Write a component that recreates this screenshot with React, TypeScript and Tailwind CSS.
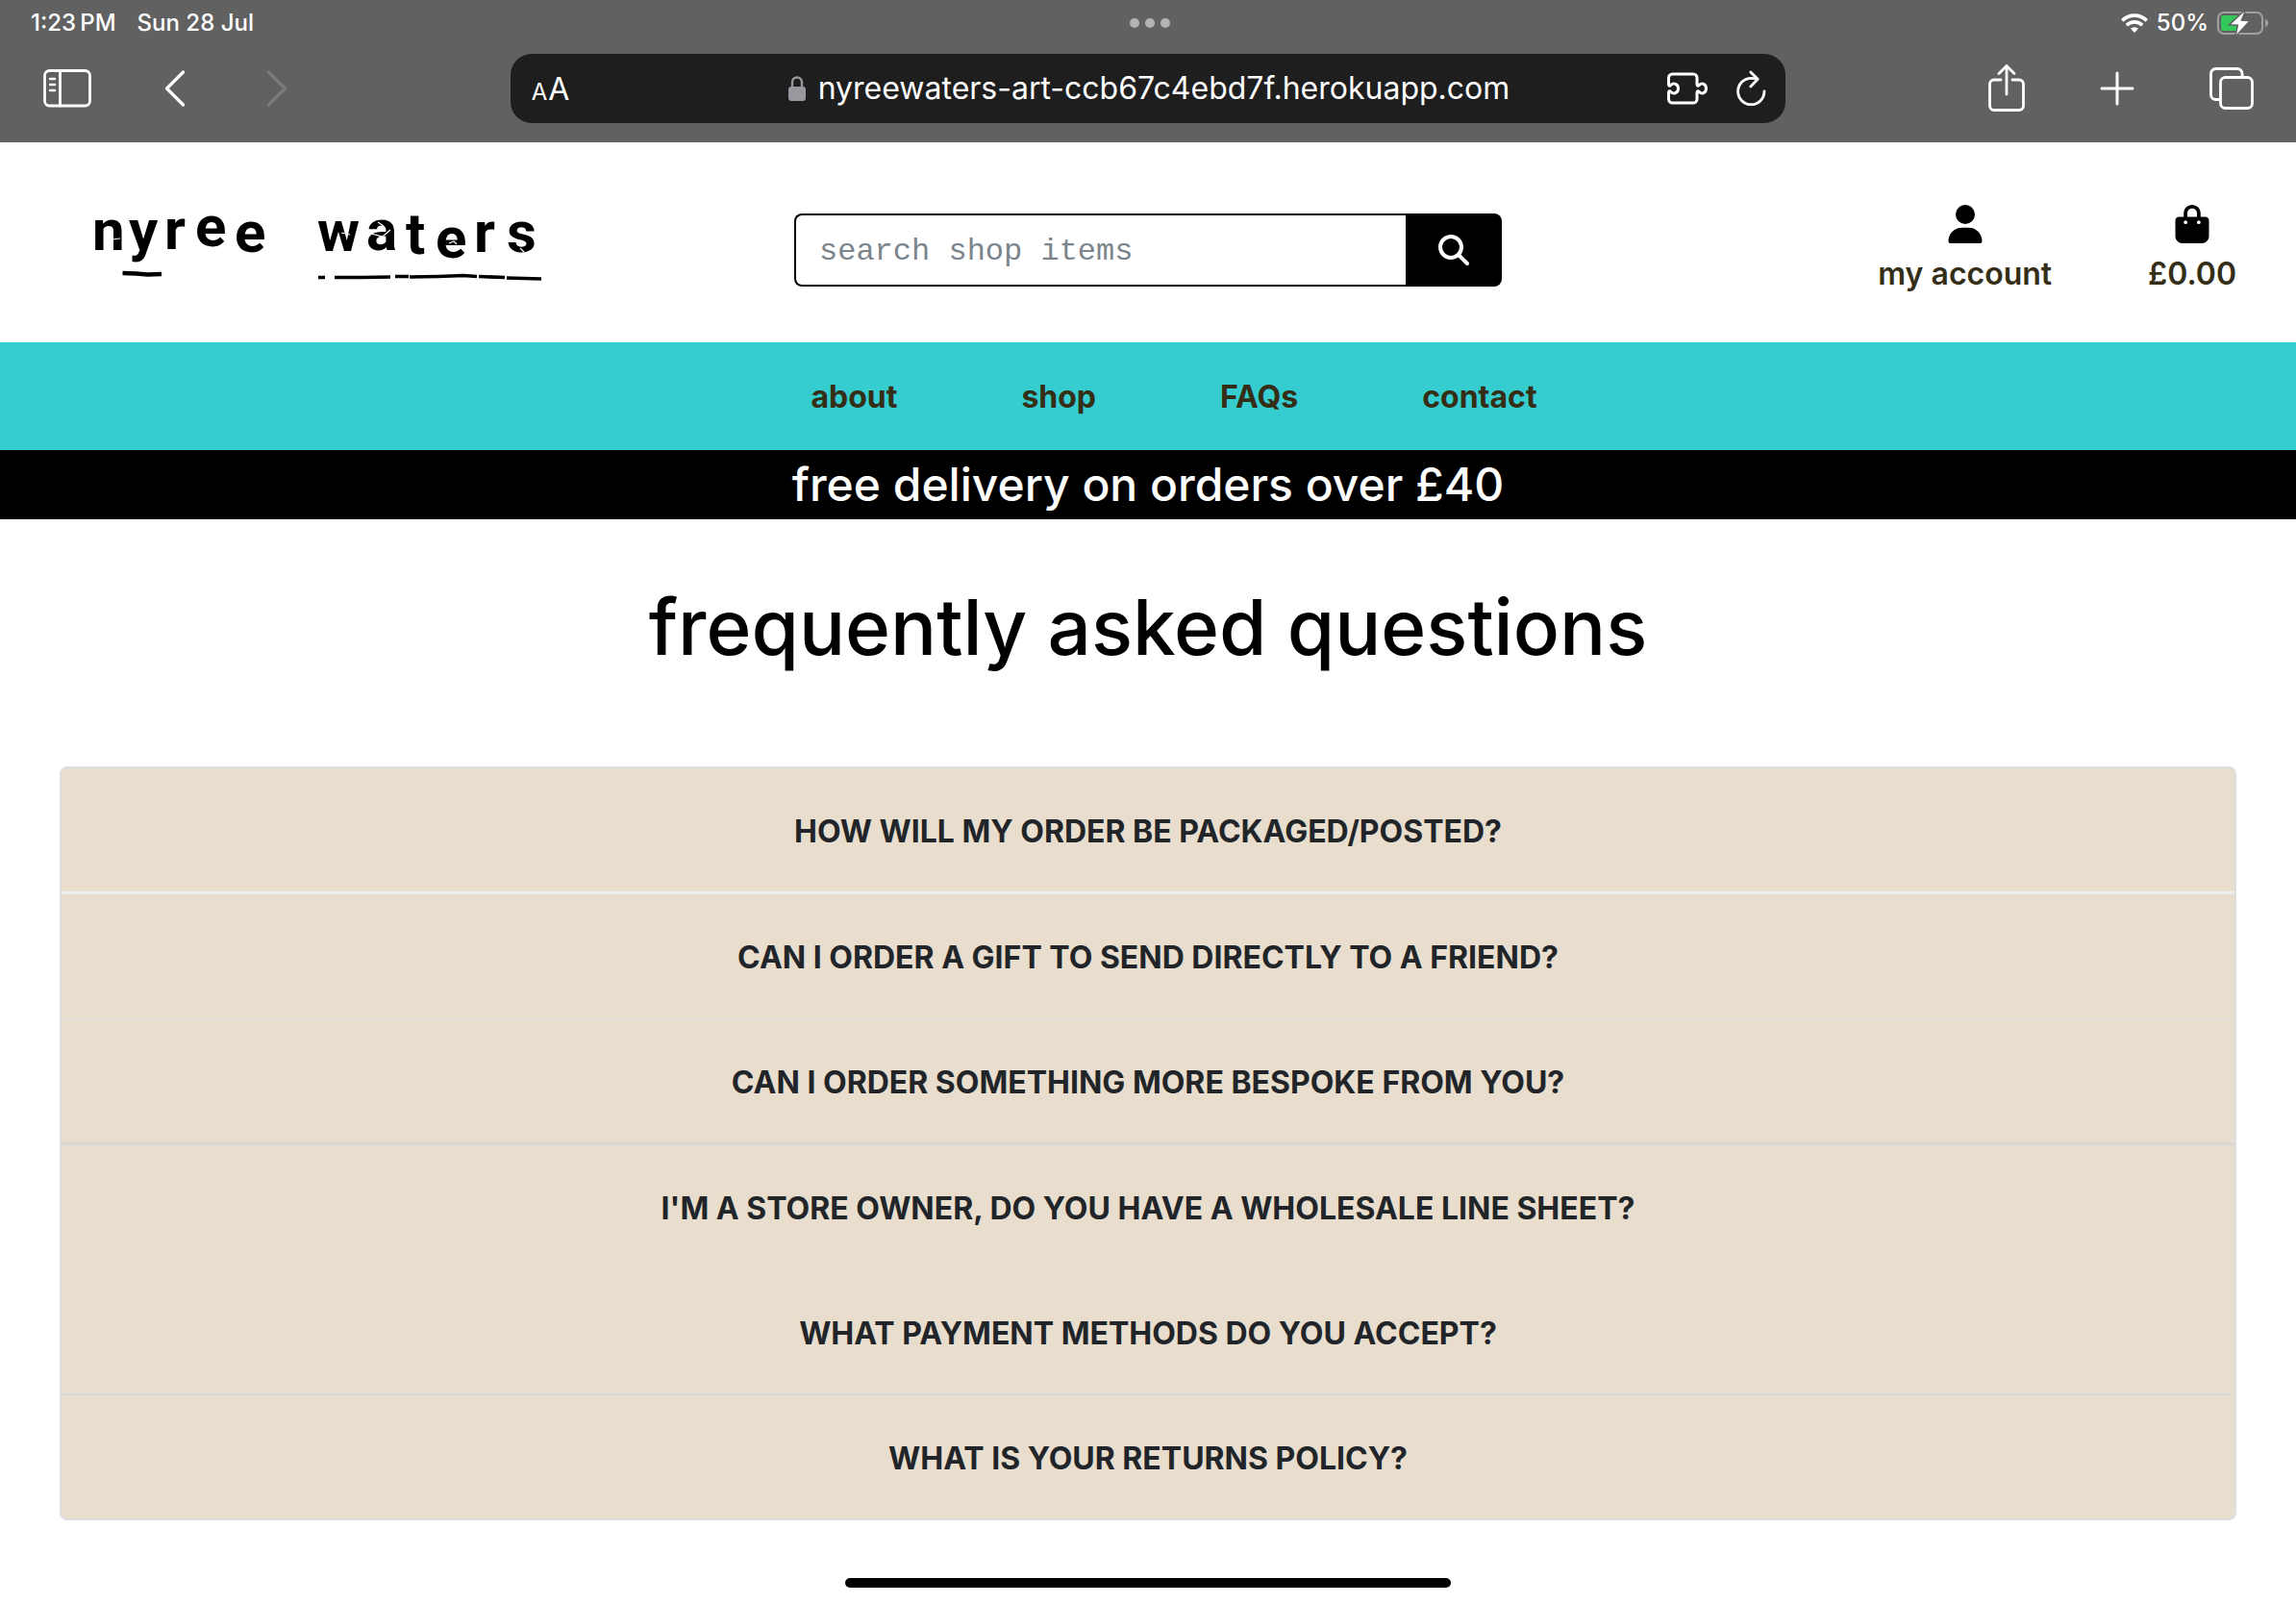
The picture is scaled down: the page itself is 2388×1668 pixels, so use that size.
import React from "react";
import { FaBagShopping, FaMagnifyingGlass, FaUser } from "react-icons/fa6";

const navLinks = ["about", "shop", "FAQs", "contact"];

const questions = [
  { text: "How will my order be packaged/posted?", divider: "border-b-[3px] border-[#edeef0]" },
  { text: "Can I order a gift to send directly to a friend?", divider: "border-b-2 border-[#e0dedb]" },
  { text: "Can I order something more bespoke from you?", divider: "border-b-[3px] border-[#d9d8d5]" },
  { text: "I'm a store owner, do you have a wholesale line sheet?", divider: "border-b-2 border-[#e5ddd1]" },
  { text: "What payment methods do you accept?", divider: "border-b-2 border-[#d9d9d8]" },
  { text: "What is your returns policy?", divider: "" },
];

function StatusBar() {
  return (
    <div className="grid h-12 grid-cols-3 items-center pr-7 pl-8 text-2xl font-medium">
      <div className="flex gap-[22px]">
        <span>1:23{"\u2009"}PM</span>
        <span>Sun 28 Jul</span>
      </div>
      <div className="flex justify-center gap-[6px]">
        <span className="size-[10px] rounded-full bg-[#b4b4b4]" />
        <span className="size-[10px] rounded-full bg-[#b4b4b4]" />
        <span className="size-[10px] rounded-full bg-[#b4b4b4]" />
      </div>
      <div className="flex items-center justify-end gap-[9px]">
        <svg width="28" height="20" viewBox="0 0 28 20" fill="none" stroke="white" strokeWidth="3.6" aria-label="Wi-Fi">
          <path d="M1.3 7.4A18 18 0 0 1 26.7 7.4" />
          <path d="M5.8 12.2a11.8 11.8 0 0 1 16.4 0" />
          <path d="M14 20l-4-4.2a5.8 5.8 0 0 1 8 0z" fill="white" stroke="none" />
        </svg>
        <span>50%</span>
        <svg width="54" height="26" viewBox="0 -1 54 26" aria-label="Battery charging">
          <rect x="1" y="1" width="46" height="22" rx="6" fill="none" stroke="#a1a1a1" strokeWidth="2" />
          <path d="M50 8c4 1 4 7 0 8z" fill="#a1a1a1" />
          <path d="M6 4h18v16H6a2 2 0 0 1-2-2V6a2 2 0 0 1 2-2z" fill="#34c759" />
          <path
            d="M28.3 0L14.3 13.2l8 .3L20 24l12.5-13.8-8.2-.4z"
            fill="white"
            stroke="#616161"
            strokeWidth="3"
            paintOrder="stroke"
          />
        </svg>
      </div>
    </div>
  );
}

function Toolbar() {
  return (
    <div className="grid grid-cols-[2fr_5fr_2fr] items-center pt-2 pb-5">
      <div className="flex items-center gap-[68px] pl-[45px]">
        <button aria-label="Show sidebar">
          <svg className="block" width="50" height="40" viewBox="0 0 50 40" fill="none" stroke="white" strokeWidth="2.8" strokeLinecap="round">
            <rect x="1.5" y="1.5" width="47" height="36.5" rx="5" />
            <path d="M17.5 2v36" />
            <path d="M7 10h5M7 16h5M7 22h5" strokeWidth="2.4" />
          </svg>
        </button>
        <button aria-label="Back">
          <svg className="block" width="38" height="40" viewBox="0 0 38 40" fill="none" stroke="white" strokeWidth="3.2" strokeLinecap="round" strokeLinejoin="round">
            <path d="M27.5 3L10.5 20l17 17" />
          </svg>
        </button>
        <button aria-label="Forward" disabled>
          <svg className="block" width="38" height="40" viewBox="0 0 38 40" fill="none" stroke="#7b7b7b" strokeWidth="3.2" strokeLinecap="round" strokeLinejoin="round">
            <path d="M10.5 3l17 17-17 17" />
          </svg>
        </button>
      </div>

      <div className="grid h-[72px] grid-cols-[1fr_auto_1fr] items-center rounded-[22px] bg-[#1e1e1e] pr-5 pl-[22px]">
        <button className="flex items-baseline gap-px justify-self-start pt-1" aria-label="Page settings">
          <span className="text-2xl leading-10">A</span>
          <span className="text-[32px] leading-10">A</span>
        </button>
        <a href="#" className="flex items-center gap-[13px] text-[32px] leading-10">
          <svg width="18" height="28" viewBox="0 0 18 28" aria-hidden="true">
            <path d="M4 14V7.5a5 5 0 0 1 10 0V14" fill="none" stroke="#98989f" strokeWidth="2.4" />
            <rect x="0" y="12" width="18" height="15" rx="3" fill="#98989f" />
          </svg>
          nyreewaters-art-ccb67c4ebd7f.herokuapp.com
        </a>
        <div className="flex items-center gap-[30px] justify-self-end">
          <button aria-label="Extensions">
            <svg className="block" width="42" height="34" viewBox="0 0 42 34" fill="none" stroke="white" strokeWidth="3" strokeLinejoin="round">
              <path d="M5.5 2h21.500a4 4 0 0 1 4 4v6.500c0 2.300 1.300 2 2.300.9 2.700-3 7.200-.9 7.200 3.600s-4.500 6.600-7.200 3.600c-1-1.100-2.300-1.400-2.300.9V28a4 4 0 0 1-4 4H5.5a4 4 0 0 1-4-4v-6.500c0-2.300 1.300-2 2.300-.9 2.700 3 7.700.9 7.700-3.600s-5-6.600-7.700-3.600c-1 1.100-2.300 1.400-2.300-.9V6a4 4 0 0 1 4-4z" />
            </svg>
          </button>
          <button aria-label="Reload">
            <svg className="block" width="31" height="38" viewBox="0 0 31 38" fill="none" stroke="white" strokeWidth="2.8" strokeLinecap="round" strokeLinejoin="round">
              <path d="M29 22a13.700 13.700 0 1 1-13.700-13.700c2 0 4 .3 6 .8" />
              <path d="M14.800 2l7.400 7.300-7.400 7.600" />
            </svg>
          </button>
        </div>
      </div>

      <div className="flex items-center justify-end gap-[78px] pr-11">
        <button aria-label="Share">
          <svg className="block" width="38" height="50" viewBox="0 0 38 50" fill="none" stroke="white" strokeWidth="2.8" strokeLinecap="round" strokeLinejoin="round">
            <path d="M13 16H6a4.500 4.500 0 0 0-4.500 4.500V43A4.500 4.500 0 0 0 6 47.500h26a4.500 4.500 0 0 0 4.500-4.500V20.500A4.500 4.500 0 0 0 32 16h-7" />
            <path d="M19 31V1.500M11 9.500l8-8 8 8" />
          </svg>
        </button>
        <button aria-label="New tab">
          <svg className="block" width="36" height="36" viewBox="0 0 36 36" fill="none" stroke="white" strokeWidth="3" strokeLinecap="round">
            <path d="M18 2v32M2 18h32" />
          </svg>
        </button>
        <button aria-label="Show tabs">
          <svg className="block" width="46" height="44" viewBox="0 0 46 44" fill="none" stroke="white" strokeWidth="2.8" strokeLinejoin="round">
            <path d="M11 33.500H6.500a5 5 0 0 1-5-5v-22a5 5 0 0 1 5-5H29a5 5 0 0 1 5 5V10" />
            <rect x="11.500" y="10.500" width="33" height="32" rx="5" />
          </svg>
        </button>
      </div>
    </div>
  );
}

function Logo() {
  return (
    <a href="#" className="ml-[80px] block" aria-label="nyree waters">
      <svg className="block overflow-visible" width="500" height="120" viewBox="80 200 500 120">
        <g fontFamily="'Liberation Sans Narrow', Roboto, sans-serif" fontWeight="700" fontSize="60">
          <text x="96 134 171 203 244" y="260 260 259 256 262">nyree</text>
          <text x="330 381 422 453 493 527" y="261 260 264 268 262 262">waters</text>
        </g>
        <g stroke="white" strokeWidth="1.2" fill="none">
          <path d="M116 249l9-1M355 242l9 2M386 243l12 3 8-7M393 231l6 4M467 253l5-2 3 3M541 258l4 4" />
        </g>
        <g stroke="black" strokeWidth="3.6" fill="none">
          <path d="M127.500 284l14 .5 12 1 14.500-.5" strokeWidth="4.400" />
          <path d="M331 288.500h7M348 288.500l28 0 30-.5M411 287.500h14M426 288l30-.5 26-1 14 1M498 287.500l27 1M527 289l36 1" />
        </g>
      </svg>
    </a>
  );
}

function ShopHeader() {
  return (
    <header className="grid h-[208px] grid-cols-3 items-center pt-4">
      <Logo />
      <form className="mx-[30px] flex h-[76px]" role="search" onSubmit={(e) => e.preventDefault()}>
        <input
          type="search"
          aria-label="search shop items"
          placeholder="search shop items"
          className="min-w-0 flex-1 rounded-l-lg border-2 border-r-0 border-black bg-white px-6 pt-[3px] font-['Courier_New','Liberation_Mono',monospace] text-[32px] text-[#6c757d] outline-none placeholder:text-[#7c848c]"
        />
        <button className="flex w-[100px] items-center justify-center rounded-r-lg bg-black text-white" aria-label="Search">
          <FaMagnifyingGlass size={32} />
        </button>
      </form>
      <div className="flex justify-end gap-[100px] pt-[2px] pr-[62px] text-[32px] leading-[48px] font-semibold text-[#352e16]">
        <a href="#" className="flex flex-col items-center gap-2">
          <FaUser className="text-black" size={40} />
          my account
        </a>
        <a href="#" className="flex flex-col items-center gap-2">
          <FaBagShopping className="text-black" size={40} />
          £0.00
        </a>
      </div>
    </header>
  );
}

export default function App() {
  return (
    <div className="min-h-screen bg-white font-['Inter',sans-serif] text-black">
      <div className="bg-[#616161] text-white">
        <StatusBar />
        <Toolbar />
      </div>
      <ShopHeader />
      <nav className="flex h-28 items-center justify-center gap-[129px] bg-[#35cdd0] pt-[2px] pl-[54px] text-[32px] font-bold text-[#352e16]">
        {navLinks.map((label) => (
          <a key={label} href="#">
            {label}
          </a>
        ))}
      </nav>
      <p className="bg-black text-center text-5xl leading-[72px] font-medium text-white">free delivery on orders over £40</p>
      <main className="px-[62px]">
        <h1 className="pt-16 pb-[97px] text-center text-[80px] leading-[96px] font-medium">frequently asked questions</h1>
        <div className="rounded-lg border-2 border-[#dcdee0] bg-[#e9decd]">
          {questions.map(({ text, divider }) => (
            <h2 key={text} className={divider}>
              <button className="block w-full pt-[42px] pb-[38px] text-center text-[32px] leading-[48px] font-bold text-[#212529] uppercase">
                {text}
              </button>
            </h2>
          ))}
        </div>
      </main>
      <div className="mx-auto mt-[60px] h-[10px] w-[630px] rounded-full bg-black" />
    </div>
  );
}
